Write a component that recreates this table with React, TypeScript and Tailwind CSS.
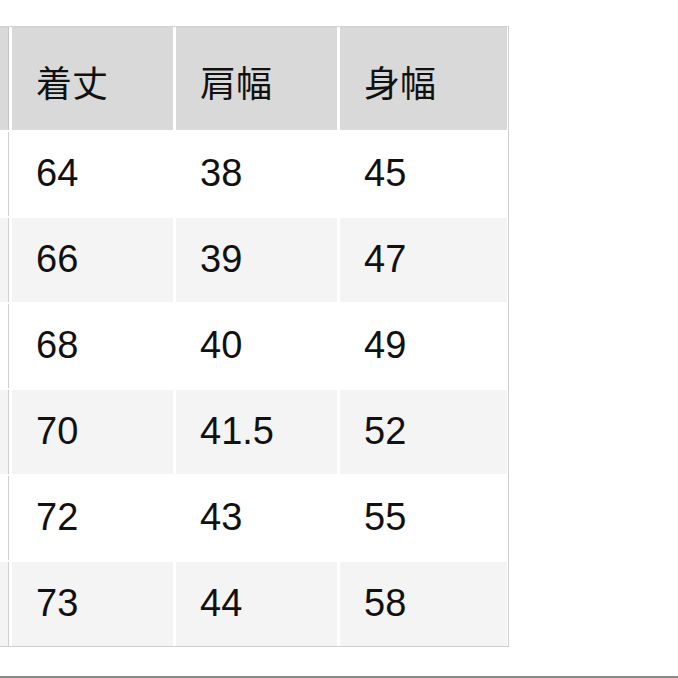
import React from "react";

interface SizeRow {
  length: string;
  shoulder: string;
  chest: string;
}

const rows: SizeRow[] = [
  { length: "64", shoulder: "38", chest: "45" },
  { length: "66", shoulder: "39", chest: "47" },
  { length: "68", shoulder: "40", chest: "49" },
  { length: "70", shoulder: "41.5", chest: "52" },
  { length: "72", shoulder: "43", chest: "55" },
  { length: "73", shoulder: "44", chest: "58" },
];

const headers = ["着丈", "肩幅", "身幅"];

const App: React.FC = () => {
  return (
    <div
      className="w-[678px] h-[678px] bg-white flex flex-col text-[#111]"
      style={{ fontFamily: '"Liberation Sans", "Noto Sans CJK JP", sans-serif' }}
    >
      <div className="mt-[26px] w-[509px] border-t border-r border-b border-[#cfcfcf] pr-px">
        <div className="grid grid-cols-[9px_161px_161px_167px] gap-x-[3px] gap-y-[2px]">
          {/* header row */}
          <div className="h-[103px] bg-[#d9d9d9] border-r border-[#c4c4c4]" />
          {headers.map((h) => (
            <div
              key={h}
              className="h-[103px] bg-[#d9d9d9] flex items-center pl-[24px] pt-[12px] text-[36px] leading-none"
            >
              {h}
            </div>
          ))}

          {/* body rows */}
          {rows.map((r, i) => {
            const bg = i % 2 === 1 ? "bg-[#f4f4f4]" : "bg-white";
            return (
              <React.Fragment key={r.length}>
                <div className={`h-[84px] ${bg} border-r border-[#cfcfcf]`} />
                {[r.length, r.shoulder, r.chest].map((v, j) => (
                  <div
                    key={j}
                    className={`h-[84px] ${bg} flex items-center pl-[24px] pb-[2px] text-[38px] leading-none`}
                  >
                    {v}
                  </div>
                ))}
              </React.Fragment>
            );
          })}
        </div>
      </div>

      <div className="mt-auto h-[2px] w-full bg-[#8a8a8a]" />
    </div>
  );
};

export default App;
